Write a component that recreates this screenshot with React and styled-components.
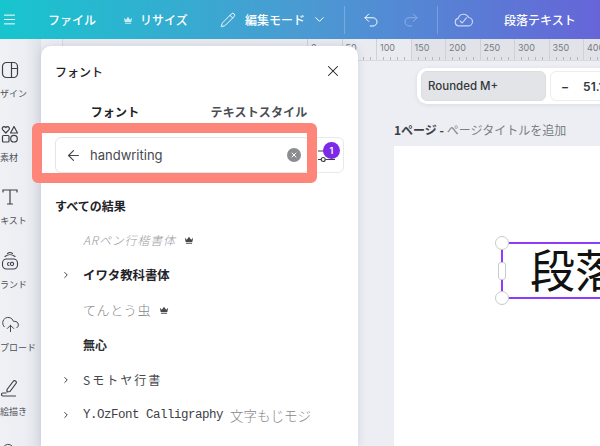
import React from "react";
import styled, { createGlobalStyle } from "styled-components";
import { Menu, Pencil, ChevronDown, ChevronRight, Undo2, Redo2, X, ArrowLeft, CloudUpload } from "lucide-react";

const Global = createGlobalStyle`
  html, body { margin: 0; padding: 0; background: #eceef3; }
  body { font-family: "Inter", "Noto Sans CJK JP", sans-serif; overflow: hidden; }
`;

const Screen = styled.div`
  width: 600px;
  height: 446px;
  overflow: hidden;
  display: flex;
  flex-direction: column;
  font-family: "Inter", "Noto Sans CJK JP", sans-serif;
`;

const Header = styled.header`
  height: 39px;
  flex: none;
  display: flex;
  align-items: center;
  color: #fff;
  background: linear-gradient(90deg, #17c5ce 0%, #4a9bd2 50%, #6665d8 100%);
  font-family: "Noto Sans CJK JP", sans-serif;
  font-size: 12px;
  font-weight: 500;
  white-space: nowrap;
`;

const HeaderText = styled.span`
  margin-left: ${({ $left }) => $left}px;
  width: ${({ $width }) => $width}px;
  flex: none;
  color: #fff;
`;

const HeaderIcon = styled.span`
  display: flex;
  flex: none;
  margin-left: ${({ $left }) => $left}px;
  opacity: ${({ $fade }) => $fade || 1};
`;

const Divider = styled.span`
  flex: none;
  width: 1px;
  height: 28px;
  margin-left: ${({ $left }) => $left}px;
  background: rgba(255, 255, 255, 0.22);
`;

const Body = styled.div`
  flex: 1;
  min-height: 0;
  display: grid;
  grid-template-columns: 41px 317px 1fr;
  grid-template-rows: 22px 1fr;
`;

const Sidebar = styled.nav`
  grid-column: 1;
  grid-row: 1 / 3;
  overflow: hidden;
  padding-top: 21px;
  background: linear-gradient(90deg, #f0f1f5 0%, #eceef3 60%, #dfe1e9 100%);
`;

const SideItem = styled.div`
  width: 72px;
  height: 63.6px;
  margin-left: -27px;
  display: flex;
  flex-direction: column;
  align-items: center;
  color: #3c4148;
`;

const SideIcon = styled.span`
  height: 20px;
  display: flex;
  align-items: center;
  justify-content: center;
  width: 20px;
  margin-left: 2px;
`;

const SideLabel = styled.span`
  margin-top: 7px;
  font-family: "Noto Sans CJK JP", sans-serif;
  font-size: 9px;
  line-height: 13px;
  white-space: nowrap;
  color: #4d5158;
`;

const Ruler = styled.div`
  grid-column: 2 / 4;
  grid-row: 1;
  display: flex;
  margin-left: 21px;
  padding-left: 244px;
  overflow: hidden;
  background: #e9ebf0;
  border-left: 1px solid #d6d8df;
  border-bottom: 1px solid #d8dae1;
  box-sizing: border-box;
`;

const RulerCell = styled.div`
  flex: none;
  width: 34.5px;
  box-sizing: border-box;
  padding: 3px 0 0 3px;
  font-size: 9px;
  line-height: 11px;
  color: #767b85;
  border-left: 1px solid #cfd1d8;
  background: ${({ $page }) => ($page ? "#e1e3e9" : "#e9ebf0")}
    repeating-linear-gradient(90deg, transparent 0 6px, #b4b7bf 6px 7px) 0 100% / 100% 3px no-repeat;
`;

const Panel = styled.section`
  grid-column: 2;
  grid-row: 1 / 3;
  margin-top: 7px;
  position: relative;
  z-index: 2;
  background: #fff;
  border-radius: 10px 10px 0 0;
  box-shadow: 0 0 8px rgba(64, 72, 110, 0.16);
  padding: 0 14px;
  font-family: "Noto Sans CJK JP", sans-serif;
  color: #1f2328;
`;

const PanelHead = styled.div`
  height: 50px;
  display: flex;
  align-items: center;
  justify-content: space-between;
  font-size: 12px;
  font-weight: 500;
`;

const Tabs = styled.div`
  height: 41px;
  display: flex;
  align-items: flex-start;
  margin-left: -14px;
  font-size: 12px;
  font-weight: 700;
`;

const Tab = styled.span`
  width: ${({ $width }) => $width}px;
  line-height: 18px;
  text-align: center;
  padding-top: 7px;
  letter-spacing: 0.15px;
  color: ${({ $active }) => ($active ? "#1f2328" : "#4a4e55")};
`;

const SearchRow = styled.div`
  display: flex;
  gap: 2px;
  height: 36px;
`;

const SearchField = styled.div`
  width: 255px;
  box-sizing: border-box;
  display: flex;
  align-items: center;
  padding: 0 0 0 9px;
  border: 1px solid #e4e5e8;
  border-radius: 6px;
  font-family: "Inter", sans-serif;
  font-size: 13px;
  color: #45494f;
`;

const Query = styled.span`
  flex: 1;
  margin-left: 8px;
`;

const Clear = styled.span`
  width: 14px;
  height: 14px;
  margin-right: 8px;
  border-radius: 50%;
  background: #8b8d90;
  color: #fff;
  display: flex;
  align-items: center;
  justify-content: center;
`;

const FilterButton = styled.div`
  position: relative;
  width: 32px;
  box-sizing: border-box;
  border: 1px solid #e8e9ec;
  border-radius: 6px;
  display: flex;
  align-items: center;
  padding-left: 5px;
  color: #3d4147;
`;

const Badge = styled.span`
  position: absolute;
  top: 4px;
  right: 3px;
  width: 17px;
  height: 17px;
  border-radius: 50%;
  background: #7d2ae8;
  color: #fff;
  font-family: "Inter", sans-serif;
  font-size: 9px;
  font-weight: 600;
  line-height: 17px;
  text-align: center;
`;

const Highlight = styled.div`
  position: absolute;
  left: -9px;
  top: 77px;
  width: 285px;
  height: 60px;
  box-sizing: border-box;
  border: 10px solid #fd8579;
  border-radius: 6px;
`;

const SectionTitle = styled.h3`
  margin: 24px 0 7px;
  font-size: 12px;
  font-weight: 700;
  line-height: 18px;
  color: #1f2328;
`;

const FontList = styled.ul`
  list-style: none;
  margin: 0;
  padding: 0;
`;

const FontRow = styled.li`
  height: 35px;
  display: flex;
  align-items: center;
  white-space: nowrap;
  color: #6f7276;
`;

const Caret = styled.span`
  width: 28px;
  flex: none;
  display: flex;
  padding-left: 6px;
  box-sizing: border-box;
  color: #2b2f33;
`;

const FontName = styled.span`
  font-family: ${({ $mono }) => ($mono ? '"Liberation Mono", "Noto Sans CJK JP", monospace' : '"Noto Sans CJK JP", sans-serif')};
  font-size: ${({ $size }) => $size || 12}px;
  font-weight: ${({ $weight }) => $weight || 300};
  color: ${({ $color }) => $color || "#8d8f93"};
  letter-spacing: ${({ $track }) => $track || 0}px;
  font-style: ${({ $italic }) => ($italic ? "italic" : "normal")};
`;

const FontAlt = styled.span`
  margin-left: 7px;
  font-size: 13.5px;
  font-weight: 300;
  color: #86888c;
`;

const CrownMark = styled.span`
  display: flex;
  margin-left: 8px;
  color: #44474c;
`;

const Workspace = styled.main`
  grid-column: 3;
  grid-row: 2;
  min-width: 0;
  overflow: hidden;
  display: flex;
  flex-direction: column;
  background: #eceef3;
`;

const Toolbar = styled.div`
  margin: 7px 0 0 59px;
  width: 240px;
  height: 36px;
  flex: none;
  box-sizing: border-box;
  display: flex;
  gap: 4px;
  padding: 3px 4px;
  border-radius: 10px;
  background: #fff;
  box-shadow: 0 1px 4px rgba(64, 72, 110, 0.1);
`;

const FontChip = styled.div`
  width: 125px;
  box-sizing: border-box;
  padding-left: 6px;
  display: flex;
  align-items: center;
  border-radius: 6px;
  background: #e3e4e8;
  border: 1px solid #dcdde1;
  font-size: 11.5px;
  font-weight: 500;
  color: #33373c;
`;

const SizeChip = styled.div`
  flex: 1;
  display: flex;
  align-items: center;
  padding-left: 10px;
  border: 1px solid #eceded;
  border-radius: 6px;
  font-size: 12px;
  font-weight: 600;
  color: #33373c;
  white-space: nowrap;
`;

const SizeValue = styled.span`
  margin-left: 14px;
`;

const PageTitle = styled.div`
  margin: 17px 0 0 36px;
  height: 18px;
  line-height: 18px;
  flex: none;
  font-family: "Noto Sans CJK JP", sans-serif;
  font-size: 12px;
  color: #7b7f86;
  white-space: nowrap;
`;

const PageNumber = styled.b`
  font-weight: 700;
  color: #3c4046;
`;

const Page = styled.div`
  flex: 1;
  margin: 7px 0 0 36px;
  padding: 96px 0 0 107px;
  background: #fff;
  overflow: hidden;
`;

const TextBox = styled.div`
  position: relative;
  width: 220px;
  height: 57px;
  box-sizing: border-box;
  padding-left: 27px;
  border: 2px solid #8b3dff;
  font-family: "Noto Sans CJK JP", sans-serif;
  font-size: 45px;
  font-weight: 400;
  line-height: 50px;
  color: #111;
  white-space: nowrap;
`;

const Handle = styled.span`
  position: absolute;
  left: -8px;
  ${({ $bottom }) => ($bottom ? "bottom: -8px;" : "top: -8px;")}
  width: 12px;
  height: 12px;
  border-radius: 50%;
  background: #fff;
  border: 1px solid #c9cacd;
`;

const SideHandle = styled.span`
  position: absolute;
  left: -5px;
  top: 18px;
  width: 6px;
  height: 16px;
  border-radius: 3px;
  background: #fff;
  border: 1px solid #c9cacd;
`;

const Crown = ({ size = 10 }) => (
  <svg width={size} height={size} viewBox="0 0 12 12" fill="currentColor">
    <path d="M1 3.2 3.4 5.6 6 2l2.6 3.6L11 3.2l-1 5.3H2z" />
    <rect x="2.2" y="9.2" width="7.6" height="1.3" rx=".5" />
  </svg>
);

const CloudCheckIcon = () => (
  <svg width="20" height="20" viewBox="0 0 24 24" fill="none" stroke="currentColor" strokeWidth="1.4" strokeLinecap="round" strokeLinejoin="round">
    <path d="M7 19a4.5 4.5 0 0 1-.7-8.9A6.5 6.5 0 0 1 18.6 9a5 5 0 0 1-.6 10z" />
    <path d="m8.5 13 2.6 2.6L16 9.5" />
  </svg>
);

const DesignIcon = () => (
  <svg width="18" height="18" viewBox="0 0 18 18" fill="none" stroke="currentColor" strokeWidth="1.2">
    <rect x="1.5" y="1.5" width="15" height="15" rx="4" />
    <path d="M10.5 1.5v15M10.5 7.5h6" />
  </svg>
);

const ElementsIcon = () => (
  <svg width="18" height="18" viewBox="0 0 18 18" fill="none" stroke="currentColor" strokeWidth="1.2" strokeLinejoin="round">
    <path d="M4.8 8 1.6 4.7c-1-1.3 0-3 1.5-3 .8 0 1.3.4 1.7 1 .4-.6.9-1 1.7-1 1.5 0 2.5 1.700 1.500 3z" />
    <path d="M13 1.500 16.500 8h-7z" />
    <rect x="1.500" y="10.500" width="6.500" height="6.500" rx="1" />
    <circle cx="13" cy="13.700" r="3.300" />
  </svg>
);

const TextIcon = () => (
  <svg width="18" height="18" viewBox="0 0 18 18" fill="none" stroke="currentColor" strokeWidth="1.2" strokeLinecap="round">
    <path d="M2 4V2h14v2M9 2v14M6.500 16h5" />
  </svg>
);

const BrandIcon = () => (
  <svg width="18" height="20" viewBox="0 0 18 20" fill="none" stroke="currentColor" strokeWidth="1.1" strokeLinecap="round">
    <path d="M6.500 2.500a4 4 0 0 1 5 0M4 5.500a8 8 0 0 1 10 0" />
    <rect x="1.500" y="8" width="15" height="10" rx="4" />
    <path d="M8 11.500a1.500 1.500 0 1 0 0 3M11 11.300a1.600 1.600 0 1 0 .01 0" />
  </svg>
);

const DrawIcon = () => (
  <svg width="20" height="20" viewBox="0 0 20 20" fill="none" stroke="currentColor" strokeWidth="1.2" strokeLinecap="round" strokeLinejoin="round">
    <path d="M7 11.500 13.500 3c1-1 3.500.5 2.800 2L10 13.500l-3 .5z" />
    <path d="M6 15H3a1.500 1.500 0 0 0 0 3h12.500" />
  </svg>
);

const FilterIcon = () => (
  <svg width="17" height="17" viewBox="0 0 17 17" fill="none" stroke="currentColor" strokeWidth="1.2">
    <path d="M0 4h6M10 4h7M0 12.500h3M7.500 12.500H17" />
    <circle cx="8" cy="4" r="2" />
    <circle cx="5.200" cy="12.500" r="2" />
  </svg>
);

const sideItems = [
  { label: "デザイン", icon: <DesignIcon /> },
  { label: "素材", icon: <ElementsIcon /> },
  { label: "テキスト", icon: <TextIcon /> },
  { label: "ブランド", icon: <BrandIcon /> },
  { label: "アップロード", icon: <CloudUpload size={19} strokeWidth={1.2} /> },
  { label: "お絵描き", icon: <DrawIcon /> },
  { label: "", icon: <CloudUpload size={19} strokeWidth={1.2} /> },
];

const rulerMarks = [0, 50, 100, 150, 200, 250, 300, 350, 400];

const Expand = ({ show }) => (
  <Caret>{show && <ChevronRight size={10} strokeWidth={2.2} />}</Caret>
);

export default function App() {
  return (
    <Screen>
      <Global />
      <Header>
        <HeaderIcon $left={2}><Menu size={15} strokeWidth={1.6} /></HeaderIcon>
        <HeaderText $left={31} $width={48}>ファイル</HeaderText>
        <HeaderIcon $left={27} $fade={0.75}><Crown /></HeaderIcon>
        <HeaderText $left={7} $width={48}>リサイズ</HeaderText>
        <HeaderIcon $left={32}><Pencil size={16} strokeWidth={1.4} /></HeaderIcon>
        <HeaderText $left={9} $width={60}>編集モード</HeaderText>
        <HeaderIcon $left={7}><ChevronDown size={15} strokeWidth={1.6} /></HeaderIcon>
        <Divider $left={17} />
        <HeaderIcon $left={17}><Undo2 size={18} strokeWidth={1.3} /></HeaderIcon>
        <HeaderIcon $left={22} $fade={0.35}><Redo2 size={18} strokeWidth={1.3} /></HeaderIcon>
        <Divider $left={17} />
        <HeaderIcon $left={15} $fade={0.7}><CloudCheckIcon /></HeaderIcon>
        <HeaderText $left={31} $width={72}>段落テキスト</HeaderText>
      </Header>
      <Body>
        <Sidebar>
          {sideItems.map((item, i) => (
            <SideItem key={i}>
              <SideIcon>{item.icon}</SideIcon>
              <SideLabel>{item.label}</SideLabel>
            </SideItem>
          ))}
        </Sidebar>
        <Ruler>
          {rulerMarks.map((mark) => (
            <RulerCell key={mark} $page={mark >= 150}>{mark}</RulerCell>
          ))}
        </Ruler>
        <Panel>
          <PanelHead>
            フォント
            <X size={18} strokeWidth={1.4} style={{ marginRight: 2 }} />
          </PanelHead>
          <Tabs>
            <Tab $active $width={148}>フォント</Tab>
            <Tab $width={140}>テキストスタイル</Tab>
          </Tabs>
          <SearchRow>
            <SearchField>
              <ArrowLeft size={17} strokeWidth={1.6} />
              <Query>handwriting</Query>
              <Clear><X size={8} strokeWidth={3} /></Clear>
            </SearchField>
            <FilterButton>
              <FilterIcon />
              <Badge>1</Badge>
            </FilterButton>
          </SearchRow>
          <Highlight />
          <SectionTitle>すべての結果</SectionTitle>
          <FontList>
            <FontRow>
              <Expand />
              <FontName $color="#9a9c9f" $track={0.8} $italic>ARペン行楷書体</FontName>
              <CrownMark><Crown /></CrownMark>
            </FontRow>
            <FontRow>
              <Expand show />
              <FontName $size={12.4} $weight={700} $color="#1f2328">イワタ教科書体</FontName>
            </FontRow>
            <FontRow>
              <Expand />
              <FontName $size={13} $color="#85878b" $track={0.6}>てんとう虫</FontName>
              <CrownMark><Crown /></CrownMark>
            </FontRow>
            <FontRow>
              <Expand />
              <FontName $size={12} $weight={700} $color="#2a2d31">無心</FontName>
            </FontRow>
            <FontRow>
              <Expand show />
              <FontName $size={12} $weight={400} $color="#45484d" $track={2}>Sモトヤ行書</FontName>
            </FontRow>
            <FontRow>
              <Expand show />
              <FontName $mono $size={12.5} $track={-0.5} $weight={400} $color="#3e4146">Y.OzFont Calligraphy</FontName>
              <FontAlt>文字もじモジ</FontAlt>
            </FontRow>
          </FontList>
        </Panel>
        <Workspace>
          <Toolbar>
            <FontChip>Rounded M+</FontChip>
            <SizeChip>−<SizeValue>51.1</SizeValue></SizeChip>
          </Toolbar>
          <PageTitle><PageNumber>1ページ - </PageNumber>ページタイトルを追加</PageTitle>
          <Page>
            <TextBox>
              段落テキスト
              <Handle />
              <Handle $bottom />
              <SideHandle />
            </TextBox>
          </Page>
        </Workspace>
      </Body>
    </Screen>
  );
}
